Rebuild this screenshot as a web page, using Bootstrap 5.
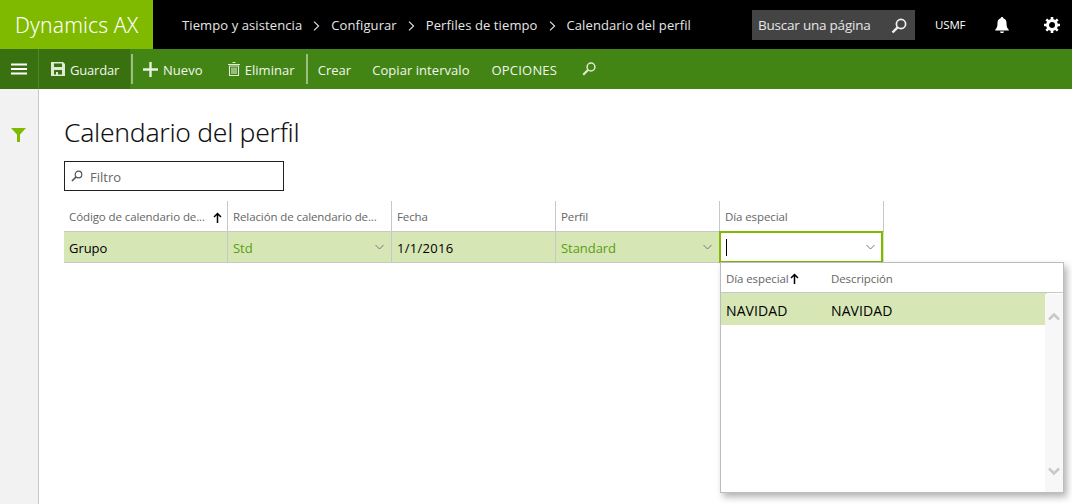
<!DOCTYPE html>
<html lang="es">
<head>
<meta charset="utf-8">
<title>Calendario del perfil</title>
<link href="https://cdn.jsdelivr.net/npm/bootstrap@5.3.0/dist/css/bootstrap.min.css" rel="stylesheet">
<style>
html,body{height:504px;overflow:hidden}
body{font-family:"Open Sans","Noto Sans",sans-serif;font-size:13px;color:#000;background:#fff}
.top-strip{height:49px;background:#000;color:#e6e6e6}
.brand-box{width:153px;height:49px;background:#7fba00;color:#fff;font-family:"Noto Sans","Open Sans",sans-serif;font-weight:300;font-size:21px;padding-left:15px;line-height:51px;letter-spacing:.15px}
.crumbs{padding-left:29px;font-size:13px;gap:11px;letter-spacing:.1px;padding-top:2px}
.crumb-sep{width:7px;height:10px}
.search-box{width:163px;height:30px;background:#444;padding:2px 8px 0 6px;font-size:13.5px;letter-spacing:-.22px;color:#e6e6e6}
.co-name{width:80px;padding-left:20px;font-size:11.5px;color:#fff;padding-top:1px;letter-spacing:-.15px}
.cmd-bar{height:40px;background:#428514;color:#fff;font-size:13px;letter-spacing:.05px}
.menu-btn{width:39px;height:40px;background:#397010;border-right:1px solid #4a8a20}
.cmd-item{height:40px;white-space:nowrap;color:#f2f6ee}
.cmd-label{padding-top:3px}
.save-label{letter-spacing:-.2px}
.caps-label{letter-spacing:.2px}
.save-item{width:91px;background:#397010;padding-left:12px;gap:5px}
.cmd-sep{width:2px;height:30px;background:#9dbf86;margin-left:1px}
.side-rail{width:39px;height:415px;background:#f2f2f2;border-right:1px solid #c8c8c8;padding:39px 1px 0 0}
.main-pane{padding-left:25px;position:relative;width:1033px}
.page-title{font-family:"Noto Sans","Open Sans",sans-serif;font-size:26.5px;font-weight:300;line-height:36px;margin:25px 0 11px;color:#111;letter-spacing:-.3px}
.filter-box{width:220px;height:30px;border:1px solid #222;padding-left:6px;gap:7px;color:#666;font-size:13px}
.filter-word{padding-top:3px}
.grid-wrap{margin-top:10px;width:820px}
.head-cell{width:164px;height:31px;border-right:1px solid #c8c8c8;border-bottom:1px solid #c8c8c8;color:#666;font-size:11.5px;padding:2px 5px 0;white-space:nowrap;letter-spacing:-.1px}
.data-row{background:#d6e6b5;height:31px;border-bottom:1px solid #c8c8c8}
.data-cell{width:164px;height:30px;border-right:1px solid #c8c8c8;padding:0 7px 0 5px;font-size:13px;letter-spacing:-.05px}
.cell-word{padding-top:3px}
.date-word{letter-spacing:.3px}
.lookup-text{color:#5a9e10}
.active-cell{width:164px;height:32px;background:#fff;border:2px solid #7fba00;padding:0 6px 0 5px;margin:-1px 0 0 -1px;flex:none}
.caret-line{width:1px;height:17px;background:#000}
.drop-panel{position:absolute;left:681px;top:173px;width:344px;height:231px;background:#fff;border:1px solid #bdbdbd;box-shadow:3px 4px 7px rgba(0,0,0,.3)}
.drop-head{height:30px;border-bottom:1px solid #c8c8c8;color:#666;font-size:11.5px;padding:2px 0 0 5px;letter-spacing:-.1px}
.drop-row{height:32px;background:#d6e6b5;width:326px;padding:3px 0 0 5px;font-size:14px;letter-spacing:.1px}
.drop-c1{width:105px}
.drop-track{position:absolute;right:0;top:31px;bottom:0;width:18px;background:#f7f7f7}
.up-chev{position:absolute;right:3px;top:18px}
.down-chev{position:absolute;right:3px;bottom:16px}
</style>
</head>
<body>
<header class="top-strip d-flex align-items-center">
  <div class="brand-box flex-shrink-0">Dynamics AX</div>
  <nav class="crumbs d-flex align-items-center flex-grow-1">
    <span>Tiempo y asistencia</span>
    <svg class="crumb-sep" viewBox="0 0 7 10"><path d="M1 .7 5.600 5 1 9.300" fill="none" stroke="#e6e6e6" stroke-width="1.100"/></svg>
    <span>Configurar</span>
    <svg class="crumb-sep" viewBox="0 0 7 10"><path d="M1 .7 5.600 5 1 9.300" fill="none" stroke="#e6e6e6" stroke-width="1.100"/></svg>
    <span>Perfiles de tiempo</span>
    <svg class="crumb-sep" viewBox="0 0 7 10"><path d="M1 .7 5.600 5 1 9.300" fill="none" stroke="#e6e6e6" stroke-width="1.100"/></svg>
    <span>Calendario del perfil</span>
  </nav>
  <div class="search-box d-flex align-items-center justify-content-between flex-shrink-0">
    <span>Buscar una página</span>
    <svg width="16" height="16" viewBox="0 0 16 16"><circle cx="10" cy="6" r="4.600" fill="none" stroke="#f0f0f0" stroke-width="1.700"/><path d="M6.600 9.400 1.500 14.500" stroke="#f0f0f0" stroke-width="2.400"/></svg>
  </div>
  <div class="co-name flex-shrink-0">USMF</div>
  <svg class="flex-shrink-0" width="14" height="16" viewBox="0 0 14 16"><path d="M7 0c.8 0 1.200.5 1.300 1.200C10.600 1.800 11.500 3.600 11.500 6c0 3.200.6 5 2.300 6.800V13.500H.2v-.7C1.900 11 2.500 9.200 2.500 6c0-2.400.9-4.200 3.200-4.800C5.800.5 6.200 0 7 0ZM5 14.400h4C9 15.400 8.100 16 7 16s-2-.6-2-1.600Z" fill="#fff"/></svg>
  <svg class="flex-shrink-0" style="margin:0 12px 0 35px" width="16" height="16" viewBox="0 0 16 16"><circle cx="8" cy="8" r="4.500" fill="none" stroke="#fff" stroke-width="3"/><path d="M8 0v3M8 13v3M0 8h3M13 8h3M2.300 2.300l2.100 2.100M11.600 11.600l2.100 2.100M2.300 13.700l2.100-2.100M11.600 4.400l2.100-2.100" stroke="#fff" stroke-width="2.600"/></svg>
</header>

<div class="cmd-bar d-flex align-items-center">
  <div class="menu-btn d-flex align-items-center justify-content-center flex-shrink-0">
    <svg width="16" height="12" viewBox="0 0 16 12"><path d="M0 1.500h16M0 6h16M0 10.500h16" stroke="#fff" stroke-width="2"/></svg>
  </div>
  <div class="cmd-item save-item d-flex align-items-center flex-shrink-0">
    <svg width="14" height="14" viewBox="0 0 14 14"><path fill-rule="evenodd" d="M0 0h12l2 2v12H0ZM3 1.500v3.500h8V1.500ZM3 8v4.500h2V10h2v2.500h4V8Z" fill="#dfe9d3"/></svg>
    <span class="cmd-label save-label">Guardar</span>
  </div>
  <div class="cmd-sep flex-shrink-0"></div>
  <div class="cmd-item d-flex align-items-center flex-shrink-0" style="margin-left:10px;gap:5px">
    <svg width="15" height="15" viewBox="0 0 15 15"><path d="M7.500 0v15M0 7.500h15" stroke="#e8f0df" stroke-width="2.400"/></svg>
    <span class="cmd-label">Nuevo</span>
  </div>
  <div class="cmd-item d-flex align-items-center flex-shrink-0" style="margin-left:25px;gap:5px">
    <svg width="12" height="14" viewBox="0 0 12 14"><path d="M4.500.5h3M0 2.500h12M1.500 4h9v9.500h-9ZM4 5.500v6.500M6 5.500v6.500M8 5.500v6.500" fill="none" stroke="#dfe9d3" stroke-width="1.100"/></svg>
    <span class="cmd-label">Eliminar</span>
  </div>
  <div class="cmd-sep flex-shrink-0" style="margin-left:11px"></div>
  <div class="cmd-item d-flex align-items-center flex-shrink-0" style="margin-left:10px"><span class="cmd-label">Crear</span></div>
  <div class="cmd-item d-flex align-items-center flex-shrink-0" style="margin-left:21px"><span class="cmd-label">Copiar intervalo</span></div>
  <div class="cmd-item d-flex align-items-center flex-shrink-0" style="margin-left:22px"><span class="cmd-label caps-label">OPCIONES</span></div>
  <svg class="flex-shrink-0" style="margin-left:25px" width="14" height="14" viewBox="0 0 14 14"><circle cx="9" cy="5" r="3.900" fill="none" stroke="#dfe9d3" stroke-width="1.500"/><path d="M6 8 1.200 12.800" stroke="#dfe9d3" stroke-width="2.200"/></svg>
</div>

<div class="d-flex">
  <aside class="side-rail d-flex justify-content-center align-items-start flex-shrink-0">
    <svg width="15" height="14" viewBox="0 0 15 14"><path d="M0 0h15L9 6.500V14H6V6.500Z" fill="#7fba00"/></svg>
  </aside>
  <main class="main-pane">
    <h1 class="page-title">Calendario del perfil</h1>
    <div class="filter-box d-flex align-items-center">
      <svg width="12" height="12" viewBox="0 0 12 12"><circle cx="7.500" cy="4.500" r="3.300" fill="none" stroke="#555" stroke-width="1.200"/><path d="M5 7 1 11" stroke="#555" stroke-width="1.700"/></svg>
      <span class="filter-word">Filtro</span>
    </div>
    <div class="grid-wrap">
      <div class="d-flex">
        <div class="head-cell d-flex align-items-center justify-content-between"><span>Código de calendario de...</span><svg width="9" height="11" viewBox="0 0 9 11"><path d="M4.500 11V1.500M1 5l3.500-3.500L8 5" fill="none" stroke="#000" stroke-width="1.500"/></svg></div>
        <div class="head-cell d-flex align-items-center">Relación de calendario de...</div>
        <div class="head-cell d-flex align-items-center">Fecha</div>
        <div class="head-cell d-flex align-items-center">Perfil</div>
        <div class="head-cell d-flex align-items-center">Día especial</div>
      </div>
      <div class="data-row d-flex">
        <div class="data-cell d-flex align-items-center"><span class="cell-word">Grupo</span></div>
        <div class="data-cell d-flex align-items-center justify-content-between"><span class="lookup-text cell-word">Std</span><svg width="9" height="6" viewBox="0 0 9 6"><path d="M.5 1 4.500 5l4-4" fill="none" stroke="#777"/></svg></div>
        <div class="data-cell d-flex align-items-center"><span class="cell-word date-word">1/1/2016</span></div>
        <div class="data-cell d-flex align-items-center justify-content-between"><span class="lookup-text cell-word">Standard</span><svg width="9" height="6" viewBox="0 0 9 6"><path d="M.5 1 4.500 5l4-4" fill="none" stroke="#777"/></svg></div>
        <div class="active-cell d-flex align-items-center justify-content-between"><span class="caret-line"></span><svg width="9" height="6" viewBox="0 0 9 6"><path d="M.5 1 4.500 5l4-4" fill="none" stroke="#777"/></svg></div>
      </div>
    </div>
    <div class="drop-panel">
      <div class="drop-head d-flex align-items-center">
        <div class="drop-c1 d-flex align-items-center"><span>Día especial</span><svg style="margin-left:1px" width="9" height="11" viewBox="0 0 9 11"><path d="M4.500 11V1.500M1 5l3.500-3.500L8 5" fill="none" stroke="#000" stroke-width="1.500"/></svg></div>
        <span>Descripción</span>
      </div>
      <div class="drop-row d-flex align-items-center"><div class="drop-c1">NAVIDAD</div><span>NAVIDAD</span></div>
      <div class="drop-track">
        <svg class="up-chev" width="12" height="9" viewBox="0 0 12 9"><path d="M1 7.500 6 2.500l5 5" fill="none" stroke="#c8c8c8" stroke-width="2.500"/></svg>
        <svg class="down-chev" width="12" height="9" viewBox="0 0 12 9"><path d="M1 1.500 6 6.500l5-5" fill="none" stroke="#c8c8c8" stroke-width="2.500"/></svg>
      </div>
    </div>
  </main>
</div>
<script src="https://cdn.jsdelivr.net/npm/bootstrap@5.3.0/dist/js/bootstrap.bundle.min.js"></script>
</body>
</html>
